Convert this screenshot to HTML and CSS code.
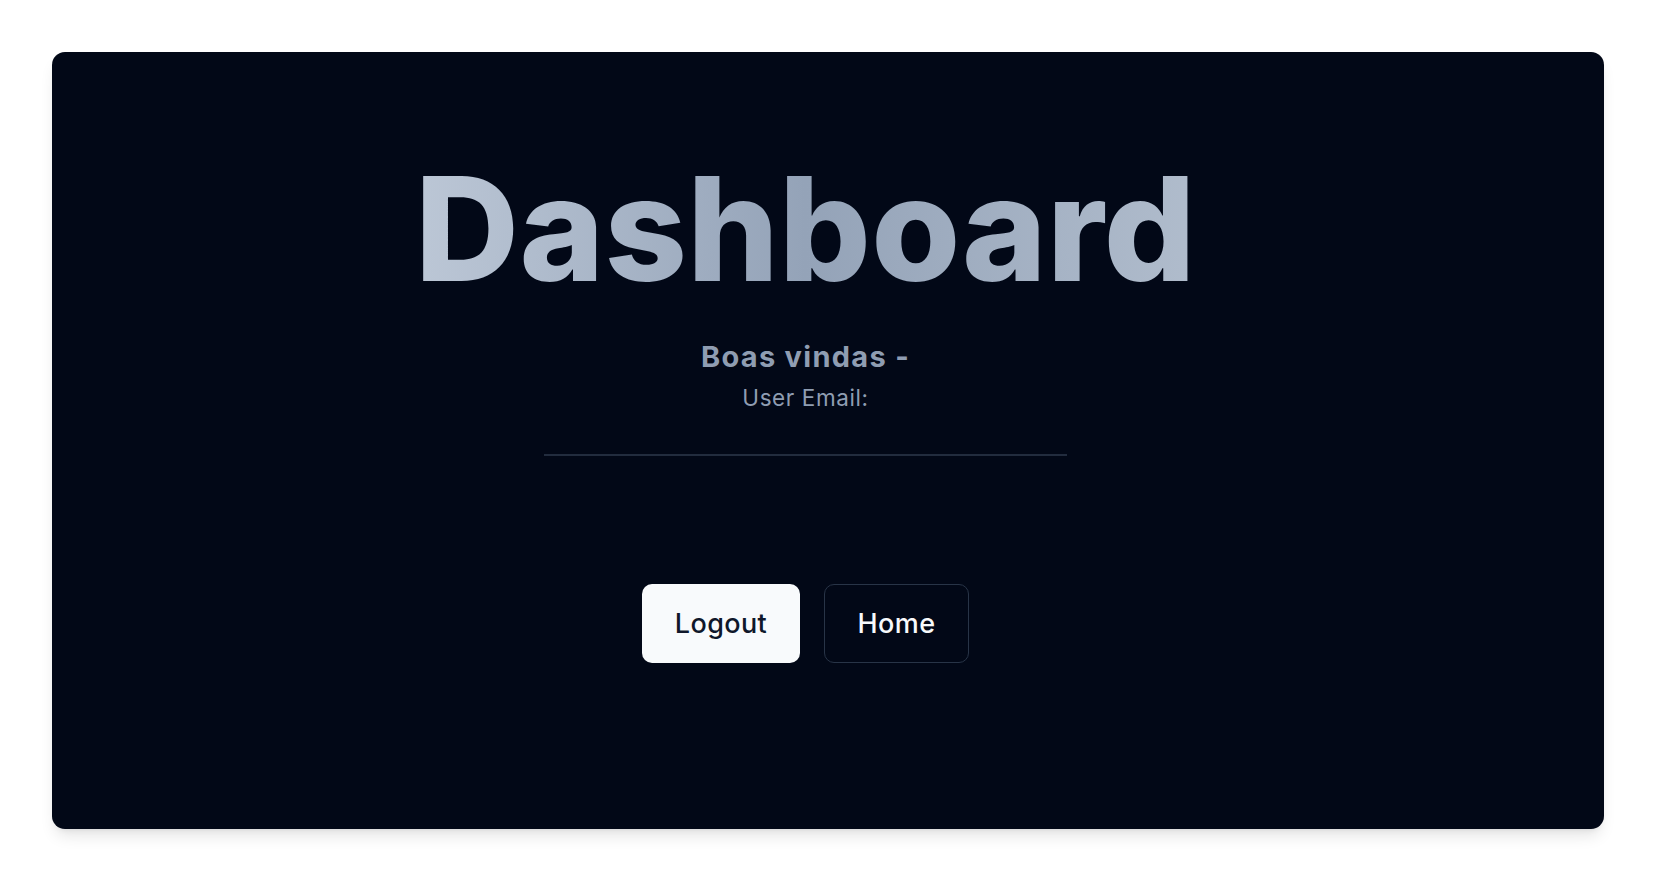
FILE: index.html
```html
<!DOCTYPE html>
<html lang="pt">
<head>
<meta charset="utf-8">
<title>Dashboard</title>
<link rel="stylesheet" href="styles.css">
</head>
<body>
<div class="page">
  <main class="card">
    <h1 class="title">Dashboard</h1>
    <h2 class="welcome">Boas vindas -</h2>
    <p class="email">User Email:</p>
    <div class="divider"></div>
    <div class="actions">
      <button class="btn btn-primary">Logout</button>
      <button class="btn btn-outline">Home</button>
    </div>
  </main>
</div>
</body>
</html>
```
FILE: styles.css
```css
* { box-sizing: border-box; }
html, body { margin: 0; padding: 0; background: #ffffff; }
body {
  font-family: Inter, "Noto Sans", sans-serif;
}
.page { padding: 52px; height: 882px; }
.card {
  height: 777px;
  background: #020817;
  border-radius: 13px;
  box-shadow: 0 10px 15px -3px rgba(0,0,0,0.1), 0 4px 6px -4px rgba(0,0,0,0.1);
  display: flex;
  flex-direction: column;
  align-items: center;
  padding: 105px 45px 0 0;
}
.title {
  margin: 0;
  font-size: 144px;
  line-height: 144px;
  font-weight: 800;
  letter-spacing: 0.3px;
  background: linear-gradient(90deg, #bcc7d6 0%, #94a3b8 50%, #b0bccc 100%);
  -webkit-background-clip: text;
  background-clip: text;
  color: transparent;
}
.welcome {
  margin: 38px 0 0;
  font-size: 29px;
  line-height: 36px;
  font-weight: 700;
  letter-spacing: 1.3px;
  color: #8f9db2;
}
.email {
  margin: 7px 0 0;
  font-size: 22.5px;
  line-height: 31.5px;
  font-weight: 400;
  letter-spacing: 0.6px;
  color: #8f9db2;
}
.divider {
  margin-top: 40px;
  width: 523px;
  height: 2px;
  background: #222c3e;
}
.actions {
  margin-top: 128px;
  display: flex;
  gap: 24px;
}
.btn {
  height: 79px;
  border-radius: 10px;
  font-family: inherit;
  font-size: 27px;
  font-weight: 500;
  letter-spacing: 0.4px;
  cursor: pointer;
}
.btn-primary {
  width: 158px;
  background: #f8fafc;
  color: #0f172a;
  border: none;
}
.btn-outline {
  width: 145px;
  background: #020817;
  color: #f8fafc;
  border: 1.5px solid #283447;
}
```
